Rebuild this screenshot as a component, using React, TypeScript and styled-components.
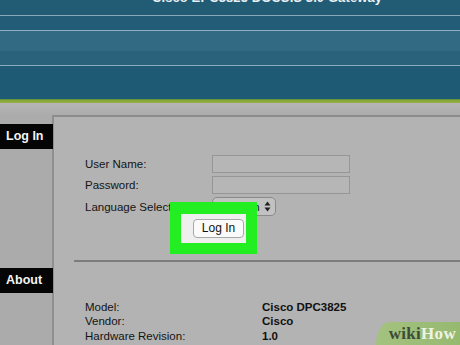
import React from "react";
import styled, { createGlobalStyle } from "styled-components";

const Global = createGlobalStyle`
  html, body { margin: 0; padding: 0; }
  body {
    width: 460px; height: 345px; overflow: hidden;
    background: #aeaeae;
    font-family: "Liberation Sans", Arial, sans-serif;
  }
`;

const Page = styled.div`
  position: relative;
  width: 460px;
  height: 345px;
  overflow: hidden;
  display: flex;
  flex-direction: column;
`;

const Header = styled.header`
  height: 99px;
  display: flex;
  flex-direction: column;
  background: #1f5a74;
  flex-shrink: 0;
`;

const Stripe = styled.div<{ $h: number; $bg: string }>`
  height: ${(p) => p.$h}px;
  background: ${(p) => p.$bg};
  flex-shrink: 0;
  overflow: hidden;
`;

const Rule = styled.div<{ $c?: string }>`
  height: 1px;
  background: ${(p) => p.$c || "#86a9bb"};
  flex-shrink: 0;
`;

const Title = styled.div`
  margin-top: -10px;
  padding-left: 152px;
  color: #e8f0f4;
  font-weight: bold;
  font-size: 13px;
  letter-spacing: 0.1px;
  white-space: nowrap;
`;

const GreenLine = styled.div`
  height: 4px;
  flex-shrink: 0;
  background: linear-gradient(#5b8a38, #86a83a 40%, #98ad4c);
`;

const Body = styled.div`
  flex: 1;
  display: flex;
  background: #ababab;
  background: linear-gradient(#b6b6b6, #ababab 12px);
`;

const Sidebar = styled.aside`
  width: 52px;
  flex-shrink: 0;
  display: flex;
  flex-direction: column;
  padding-top: 21px;
  position: relative;
  z-index: 1;
`;

const SideLabel = styled.div<{ $gap?: number }>`
  width: 53px;
  height: 25px;
  margin-top: ${(p) => p.$gap || 0}px;
  background: #050505;
  color: #f4f4f4;
  font-weight: bold;
  font-size: 12.5px;
  line-height: 25px;
  padding-left: 6px;
  box-sizing: border-box;
`;

const Panel = styled.main`
  flex: 1;
  margin-top: 12px;
  border-top: 2px solid #8c8c8c;
  border-left: 2px solid #8f8f8f;
  background: #b3b3b3;
  display: flex;
  flex-direction: column;
  padding-top: 36px;
`;

const Form = styled.div`
  display: grid;
  grid-template-columns: 127px 1fr;
  grid-auto-rows: 21.5px;
  padding-left: 31px;
  align-items: center;
`;

const Label = styled.span`
  font-size: 11.5px;
  color: #141414;
  white-space: nowrap;
`;

const Input = styled.div`
  height: 18px;
  border: 1px solid #969696;
  background: #b6b6b6;
  box-sizing: border-box;
  width: 138px;
`;

const Select = styled.div`
  width: 64px;
  height: 19px;
  border: 1px solid #8a8a8a;
  border-radius: 5px;
  background: #c2c2c2;
  box-sizing: border-box;
  display: flex;
  align-items: center;
  justify-content: space-between;
  padding: 0 4px 0 9px;
  font-size: 11.5px;
  color: #1a1a1a;
`;

const ButtonRow = styled.div`
  display: flex;
  padding-left: 139px;
  margin-top: 1px;
`;

const ButtonWrap = styled.div`
  position: relative;
`;

const Highlight = styled.div`
  position: absolute;
  left: -23px;
  top: -17px;
  width: 87px;
  height: 52px;
  box-sizing: border-box;
  border: 11px solid #22ee22;
  border-top-width: 12px;
  background: #efefef;
`;

const Button = styled.div`
  position: relative;
  width: 51px;
  height: 19px;
  border: 1px solid #a8a8a8;
  border-radius: 4px;
  background: #fafafa;
  box-sizing: border-box;
  font-size: 12px;
  line-height: 17px;
  text-align: center;
  color: #111;
`;

const Separator = styled.div`
  margin: 22px 0 0 20px;
  height: 2px;
  background: #7c7c7c;
`;

const Info = styled.div`
  display: grid;
  grid-template-columns: 177px 1fr;
  grid-auto-rows: 14.5px;
  padding-left: 31px;
  margin-top: 38px;
  align-items: center;
`;

const Value = styled.span`
  font-size: 11.5px;
  font-weight: bold;
  color: #111;
`;

const Watermark = styled.div`
  position: absolute;
  right: 0;
  bottom: 0;
  width: 84px;
  height: 23px;
  border-top-left-radius: 14px 23px;
  background: linear-gradient(90deg, #a3c27f, #96b970);
  display: flex;
  align-items: flex-end;
  justify-content: flex-end;
  padding: 0 4px 3px 0;
  box-sizing: border-box;
  font-family: "Liberation Serif", "DejaVu Serif", serif;
  font-weight: bold;
  font-size: 17px;
  line-height: 17px;
  letter-spacing: 0.3px;
`;

const Wiki = styled.span`
  color: #3d4c38;
`;
const How = styled.span`
  color: #eef3e6;
`;

export default function App() {
  return (
    <Page>
      <Global />
      <Header>
        <Stripe $h={15} $bg="#215b74">
          <Title>Cisco EPC3825 DOCSIS 3.0 Gateway</Title>
        </Stripe>
        <Rule />
        <Stripe $h={14} $bg="#225c77" />
        <Rule $c="#8fb0c0" />
        <Stripe $h={20} $bg="#326983" />
        <Stripe $h={14} $bg="#2a627c" />
        <Rule $c="#8aacbd" />
        <Stripe $h={33} $bg="#1f5a75" />
      </Header>
      <GreenLine />
      <Body>
        <Sidebar>
          <SideLabel>Log In</SideLabel>
          <SideLabel $gap={119}>About</SideLabel>
        </Sidebar>
        <Panel>
          <Form>
            <Label>User Name:</Label>
            <Input />
            <Label>Password:</Label>
            <Input />
            <Label>Language Selection:</Label>
            <Select>
              <span>English</span>
              <svg width="7" height="11" viewBox="0 0 7 11">
                <path d="M3.5 0.5 L6.5 4.5 H0.5 Z M3.5 10.5 L6.5 6.5 H0.5 Z" fill="#222" />
              </svg>
            </Select>
          </Form>
          <ButtonRow>
            <ButtonWrap>
              <Highlight />
              <Button>Log In</Button>
            </ButtonWrap>
          </ButtonRow>
          <Separator />
          <Info>
            <Label>Model:</Label>
            <Value>Cisco DPC3825</Value>
            <Label>Vendor:</Label>
            <Value>Cisco</Value>
            <Label>Hardware Revision:</Label>
            <Value>1.0</Value>
          </Info>
        </Panel>
      </Body>
      <Watermark>
        <Wiki>wiki</Wiki>
        <How>How</How>
      </Watermark>
    </Page>
  );
}
